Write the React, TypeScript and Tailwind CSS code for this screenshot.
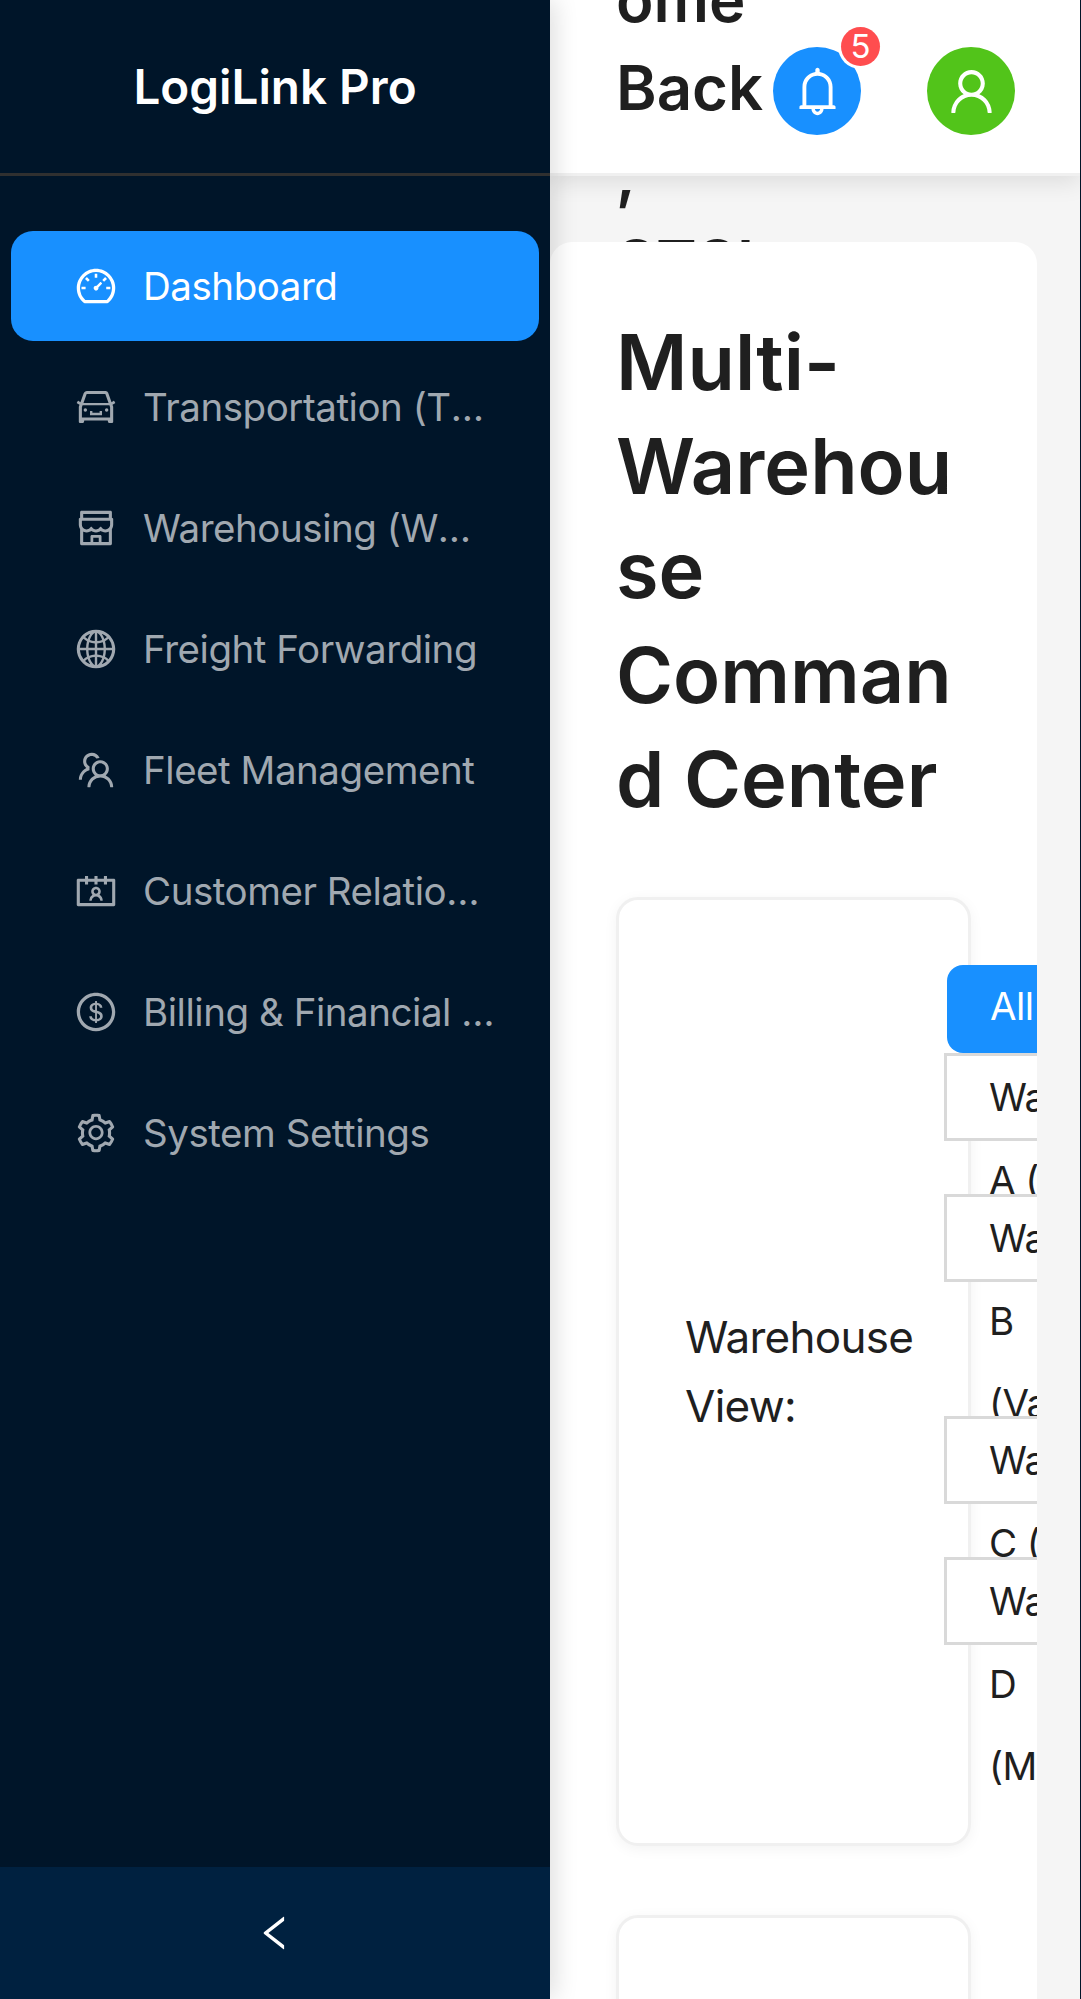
import {
  AiOutlineDashboard,
  AiOutlineCar,
  AiOutlineShop,
  AiOutlineGlobal,
  AiOutlineTeam,
  AiOutlineContacts,
  AiOutlineDollar,
  AiOutlineSetting,
  AiOutlineBell,
  AiOutlineUser,
  AiOutlineLeft,
} from "react-icons/ai";

const items = [
  { label: "Dashboard", Icon: AiOutlineDashboard, active: true },
  { label: "Transportation (TMS)", Icon: AiOutlineCar },
  { label: "Warehousing (WMS)", Icon: AiOutlineShop },
  { label: "Freight Forwarding", Icon: AiOutlineGlobal },
  { label: "Fleet Management", Icon: AiOutlineTeam },
  { label: "Customer Relationship", Icon: AiOutlineContacts },
  { label: "Billing & Financial Management", Icon: AiOutlineDollar },
  { label: "System Settings", Icon: AiOutlineSetting },
];

const font = "font-['Inter','Noto_Sans',sans-serif]";

export default function App() {
  return (
    <div className={`flex h-[1999px] w-[1081px] overflow-hidden bg-[#001529] ${font}`}>
      <aside className="relative z-10 flex w-[550px] shrink-0 flex-col bg-[#001529] shadow-[6px_0_22px_rgba(0,0,0,0.12)]">
        <div className="flex h-[176px] items-center justify-center border-b-[3px] border-[#303030] text-[47.6px] font-semibold text-white">
          LogiLink Pro
        </div>
        <nav className="flex flex-1 flex-col gap-[11px] px-[11px] pt-[55px]">
          {items.map(({ label, Icon, active }) => (
            <div
              key={label}
              className={`flex h-[110px] items-center gap-[25px] rounded-[22px] pl-[63px] pr-[40px] text-[38.5px] tracking-[-0.012em] ${
                active ? "bg-[#1890ff] text-white" : "text-[#a0a8b0]"
              }`}
            >
              <Icon className="h-[44px] w-[44px] shrink-0" />
              <span className="min-w-0 flex-1 truncate pt-[2px]">{label}</span>
            </div>
          ))}
        </nav>
        <div className="flex h-[132px] items-center justify-center bg-[#002140] text-white">
          <AiOutlineLeft className="h-[44px] w-[44px]" />
        </div>
      </aside>

      <main className="flex w-[530px] shrink-0 flex-col bg-[#f5f5f5]">
        <header className="flex h-[176px] shrink-0 items-center border-b-[3px] border-[#f0f0f0] bg-white pl-[66px] pr-[65px] shadow-[0_6px_22px_rgba(0,0,0,0.1)]">
          <div className="w-[157px] shrink-0 pt-[2px] text-[61.7px] font-semibold leading-[87.5px] text-[#1f1f1f] [overflow-wrap:anywhere]">
            Welcome Back, STSI
          </div>
          <div className="relative mt-[9px] flex h-[88px] w-[88px] shrink-0 items-center justify-center rounded-full bg-[#1890ff] text-white">
            <AiOutlineBell className="h-[55px] w-[55px]" />
            <span className="absolute left-[68px] top-[-20px] flex h-[39px] w-[39px] items-center justify-center rounded-full bg-[#ff4d4f] text-[33px] leading-none text-white shadow-[0_0_0_3px_#ffffff]">
              5
            </span>
          </div>
          <div className="ml-[66px] mt-[9px] flex h-[88px] w-[88px] shrink-0 items-center justify-center rounded-full bg-[#52c41a] text-white">
            <AiOutlineUser className="h-[55px] w-[55px]" />
          </div>
        </header>

        <section className="relative mt-[66px] w-[487px] flex-1 overflow-hidden rounded-t-[22px] bg-white p-[66px]">
          <h1 className="m-0 pt-[2px] text-[77.5px] font-semibold leading-[104.2px] text-[#1f1f1f] [overflow-wrap:anywhere]">
            Multi-Warehouse Command Center
          </h1>

          <div className="mt-[66px] flex h-[949px] w-[355px] gap-[32px] rounded-[22px] border-[3px] border-[#f0f0f0] bg-white p-[66px] shadow-[0_3px_14px_rgba(0,0,0,0.05)]">
            <div className="w-[227px] shrink-0 self-center text-[44px] leading-[69px] tracking-[-0.016em] text-[#1f1f1f]">
              Warehouse View:
            </div>
            <div className="-mt-[1px] flex w-[300px] shrink-0 flex-col text-[38.5px] leading-[82.5px] tracking-[-0.014em] text-[#1f1f1f]">
              <div className="ml-[3px] h-[88px] shrink-0 rounded-l-[16px] bg-[#1890ff] pl-[43px] text-white">All Warehouses</div>
              <div className="relative h-[88px] shrink-0 border-[3px] border-[#d9d9d9] bg-white pl-[42px]">
                Warehouse
                <br />A (Main)
              </div>
              <div className="relative mt-[53px] h-[88px] shrink-0 border-[3px] border-[#d9d9d9] bg-white pl-[42px]">
                Warehouse
                <br />B
                <br />
                (Valley)
              </div>
              <div className="relative mt-[134px] h-[88px] shrink-0 border-[3px] border-[#d9d9d9] bg-white pl-[42px]">
                Warehouse
                <br />C (South)
              </div>
              <div className="relative mt-[53px] h-[88px] shrink-0 border-[3px] border-[#d9d9d9] bg-white pl-[42px]">
                Warehouse
                <br />D
                <br />
                (Mountain)
              </div>
            </div>
          </div>

          <div className="mt-[69px] h-[400px] w-[355px] rounded-[22px] border-[3px] border-[#f0f0f0] bg-white shadow-[0_3px_14px_rgba(0,0,0,0.05)]" />
        </section>
      </main>
    </div>
  );
}
